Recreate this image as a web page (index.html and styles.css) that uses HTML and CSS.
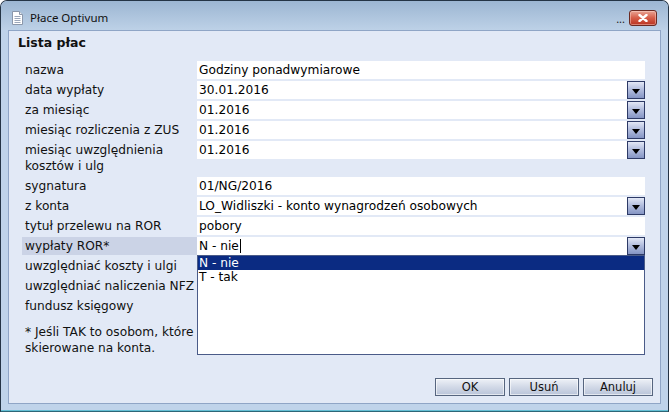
FILE: index.html
```html
<!DOCTYPE html>
<html lang="pl">
<head>
<meta charset="utf-8">
<title>Płace Optivum</title>
<link rel="stylesheet" href="styles.css">
</head>
<body>
<div class="window">
  <div class="titlebar">
    <svg class="app-icon" width="11" height="14" viewBox="0 0 11 14">
      <path d="M0.5 0.5 H7.5 L10.5 3.5 V13.5 H0.5 Z" fill="#fff" stroke="#8b97aa"/>
      <path d="M7.5 0.5 V3.5 H10.5" fill="#e6ebf2" stroke="#8b97aa"/>
      <path d="M2.5 5.5 H8.5 M2.5 7.5 H8.5 M2.5 9.5 H8.5 M2.5 11.5 H8.5" stroke="#9ba7ba"/>
    </svg>
    <span class="title">Płace Optivum</span>
    <span class="dots">...</span>
    <span class="close">
      <svg width="10" height="8" viewBox="0 0 10 8"><path d="M1.5 1 L8.5 7 M8.5 1 L1.5 7" stroke="#fff" stroke-width="2.4" stroke-linecap="round"/></svg>
    </span>
  </div>
  <div class="frame">
    <div class="content">
      <h1 class="heading">Lista płac</h1>
      <div class="form">
        <div class="label">nazwa</div>
        <div class="field"><span class="val">Godziny ponadwymiarowe</span></div>

        <div class="label">data wypłaty</div>
        <div class="field"><span class="val">30.01.2016</span><span class="dd-btn"></span></div>

        <div class="label">za miesiąc</div>
        <div class="field"><span class="val">01.2016</span><span class="dd-btn"></span></div>

        <div class="label">miesiąc rozliczenia z ZUS</div>
        <div class="field"><span class="val">01.2016</span><span class="dd-btn"></span></div>

        <div class="label">miesiąc uwzględnienia<br>kosztów i ulg</div>
        <div class="field"><span class="val">01.2016</span><span class="dd-btn"></span></div>

        <div class="label">sygnatura</div>
        <div class="field"><span class="val">01/NG/2016</span></div>

        <div class="label">z konta</div>
        <div class="field"><span class="val">LO_Widliszki - konto wynagrodzeń osobowych</span><span class="dd-btn"></span></div>

        <div class="label">tytuł przelewu na ROR</div>
        <div class="field"><span class="val">pobory</span></div>

        <div class="label label-active">wypłaty ROR*</div>
        <div class="field field-open"><span class="val">N - nie<span class="caret"></span></span><span class="dd-btn"></span>
          <ul class="list">
            <li class="item selected">N - nie</li>
            <li class="item">T - tak</li>
          </ul>
        </div>

        <div class="label">uwzględniać koszty i ulgi</div>
        <div class="field"><span class="val"></span><span class="dd-btn"></span></div>

        <div class="label">uwzględniać naliczenia NFZ</div>
        <div class="field"><span class="val"></span><span class="dd-btn"></span></div>

        <div class="label">fundusz księgowy</div>
        <div class="field"><span class="val"></span><span class="dd-btn"></span></div>
      </div>
      <p class="note">* Jeśli TAK to osobom, które<br>skierowane na konta.</p>
      <div class="buttons">
        <button class="btn">OK</button>
        <button class="btn">Usuń</button>
        <button class="btn">Anuluj</button>
      </div>
    </div>
  </div>
</div>
</body>
</html>
```
FILE: styles.css
```css
* { box-sizing: border-box; }
html, body { margin: 0; padding: 0; }
body {
  width: 670px;
  height: 415px;
  overflow: hidden;
  background: #ffffff;
  font-family: "DejaVu Sans", Verdana, sans-serif;
  font-size: 12px;
  color: #000;
}
.window {
  width: 669px;
  height: 412px;
  border: 1px solid #243445;
  border-bottom-color: #2e6677;
  border-radius: 7px 7px 0 0;
  display: flex;
  flex-direction: column;
  overflow: hidden;
  background: #bfd3ea;
}
.titlebar {
  flex: none;
  height: 29px;
  display: flex;
  align-items: flex-start;
  padding: 9px 11px 0 11px;
  background: linear-gradient(#9cb6d2, #bdd1e7);
}
.app-icon { margin-top: 1px; flex: none; }
.title {
  margin-left: 7px;
  font-family: "Noto Sans", "Open Sans", sans-serif;
  font-size: 11.5px;
  line-height: 16px;
  color: #111;
  flex: 1;
}
.dots {
  font-family: "Noto Sans", sans-serif;
  font-size: 11px;
  line-height: 16px;
  color: #1a1a1a;
  margin-right: 4px;
  padding-top: 1px;
}
.close {
  width: 28px;
  height: 16px;
  border: 1px solid #6b2a22;
  border-radius: 3px;
  background: linear-gradient(#e9a595, #d65d48 50%, #b93422);
  display: flex;
  align-items: center;
  justify-content: center;
  box-shadow: inset 0 0 0 1px rgba(255, 220, 210, 0.45);
}
.frame {
  flex: 1;
  display: flex;
  padding: 0 7px 7px 7px;
  box-shadow: inset 0 -1px 0 #63bfd4;
}
.content {
  flex: 1;
  display: flex;
  flex-direction: column;
  border: 1px solid #8fa5c6;
  background: #e2e9f6;
  padding: 4px 7px 7px 9px;
}
.heading {
  margin: 0 0 10px 0;
  font-size: 12.5px;
  font-weight: bold;
  line-height: 16px;
  color: #111;
}
.form {
  margin-left: 4px;
  display: grid;
  grid-template-columns: 175px 448px;
  row-gap: 2px;
}
.label {
  padding: 1px 0 1px 3px;
  line-height: 16px;
  white-space: nowrap;
  color: #111;
  font-size: 12.2px;
}
.label-active { background: #cbd3e6; }
.field {
  align-self: start;
  height: 18px;
  background: #fff;
  display: flex;
  position: relative;
  line-height: 18px;
  white-space: nowrap;
  font-size: 12.2px;
}
.val {
  flex: 1;
  padding-left: 2px;
  display: flex;
  align-items: center;
}
.caret {
  display: inline-block;
  width: 1px;
  height: 14px;
  background: #000;
  margin-left: 1px;
}
.dd-btn {
  flex: none;
  width: 18px;
  height: 18px;
  border: 1px solid #2d3a66;
  background: linear-gradient(#e3e8f6, #b4bfdf 45%, #8595c4);
  display: flex;
  align-items: flex-end;
  justify-content: center;
  padding-bottom: 4px;
}
.dd-btn::after {
  content: "";
  width: 0;
  height: 0;
  border-left: 4px solid transparent;
  border-right: 4px solid transparent;
  border-top: 5px solid #000;
}
.list {
  position: absolute;
  z-index: 10;
  top: 100%;
  left: 0;
  width: 448px;
  height: 100px;
  margin: 0;
  padding: 0;
  list-style: none;
  background: #fff;
  border: 1px solid #4a5b88;
}
.item {
  height: 14px;
  line-height: 14px;
  padding-left: 1px;
  color: #000;
}
.item.selected {
  background: #0b2b82;
  color: #fff;
}
.note {
  margin: 9px 0 0 7px;
  line-height: 16px;
  white-space: nowrap;
  color: #111;
  font-size: 12.2px;
}
.buttons {
  margin-top: auto;
  display: flex;
  justify-content: flex-end;
  gap: 4px;
}
.btn {
  width: 70px;
  height: 18px;
  padding: 0;
  border: 1px solid #56657f;
  background: linear-gradient(#eef1f7, #d2d9e7 50%, #b9c4d9);
  box-shadow: inset 0 0 0 1px rgba(255, 255, 255, 0.6);
  font-family: "DejaVu Sans", Verdana, sans-serif;
  font-size: 11.5px;
  line-height: 16px;
  color: #111;
}
```
